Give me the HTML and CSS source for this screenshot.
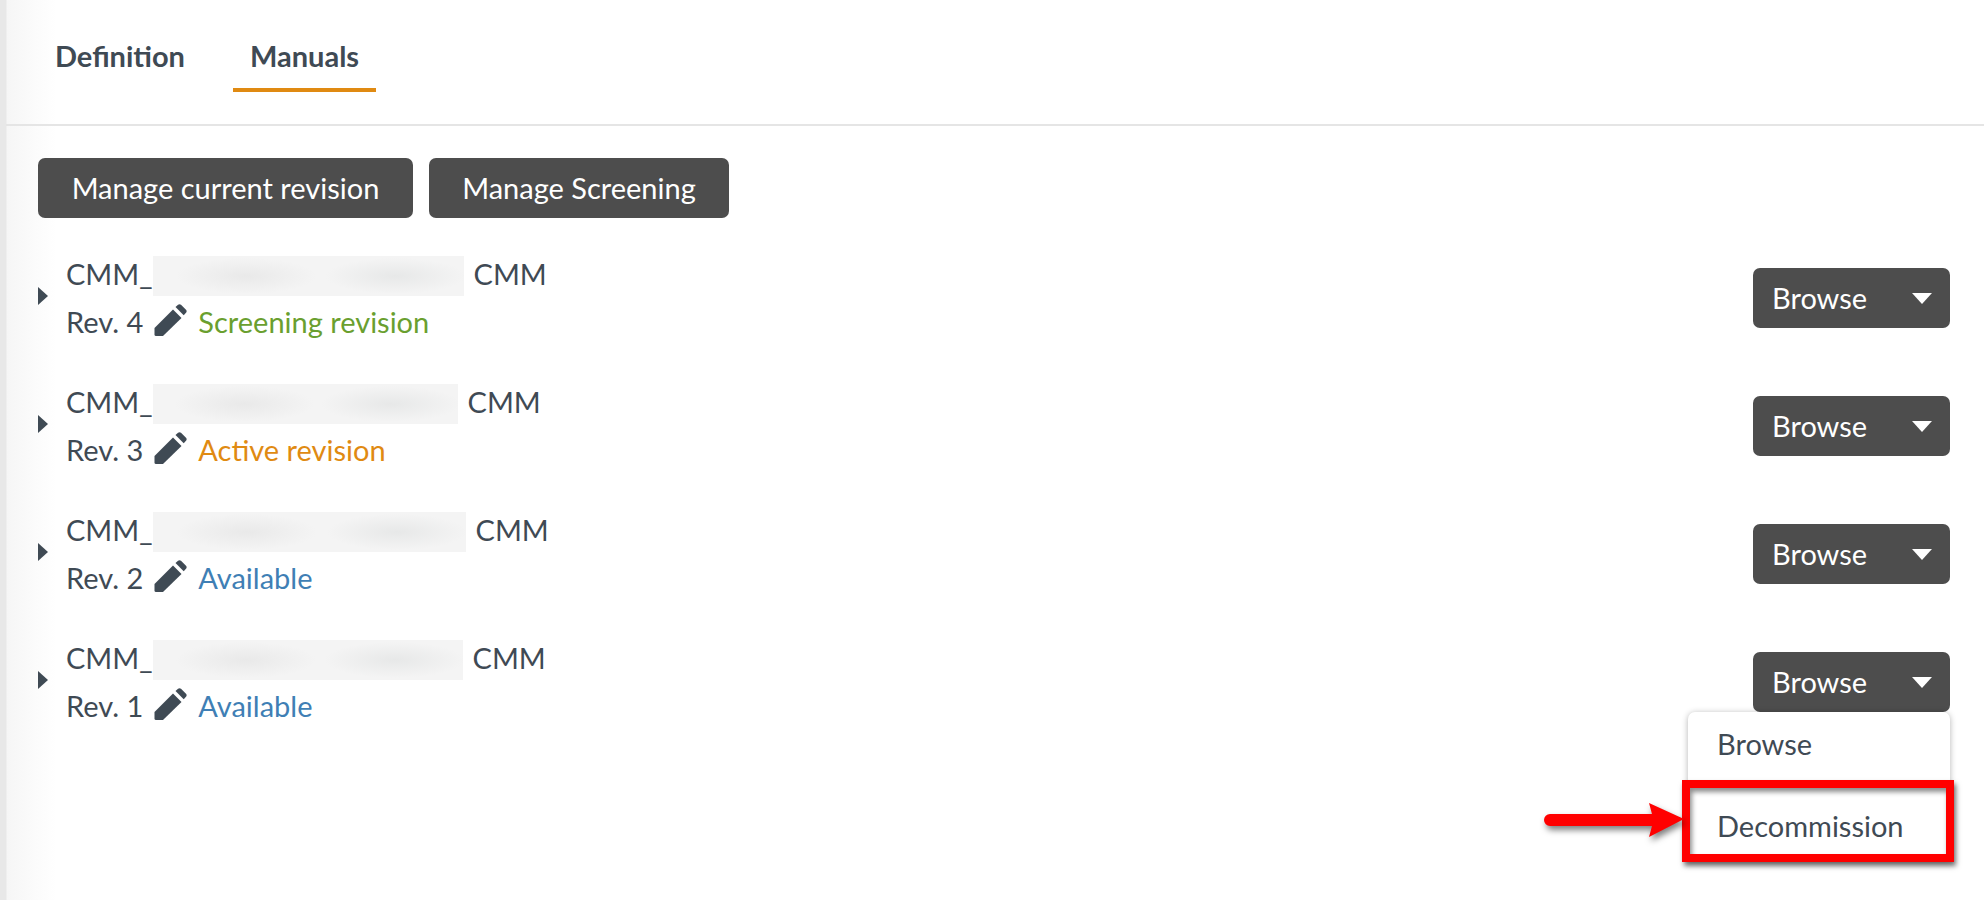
FILE: index.html
```html
<!DOCTYPE html>
<html lang="en">
<head>
    <meta charset="UTF-8">
    <meta name="viewport" content="width=device-width, initial-scale=1.0">
    <title>Manuals</title>
    <link rel="stylesheet" href="styles.css">
</head>
<body>
    <div class="tabs">
        <a href="#" class="tab">Definition</a>
        <a href="#" class="tab tab-active">Manuals</a>
    </div>

    <div class="content">
        <div class="actions">
            <button class="btn btn-current">Manage current revision</button>
            <button class="btn btn-screening">Manage Screening</button>
        </div>

        <div class="revision">
            <span class="expander"></span>
            <div class="revision-text">
                <div class="name-line">CMM_<span class="redact redact-1"></span><span class="suffix">CMM</span></div>
                <div class="rev-line">Rev. 4
                    <svg class="pencil" viewBox="0 0 33 32"><path d="M.5 24 19 5.5 27.5 14 9 32H2Q.5 32 .5 30.500Z"/><path d="M21.500 3 24 .8Q25.500-.3 27 .8L32 5.800Q33.300 7.300 32 8.800L29.700 11.200Z"/></svg>
                    <span class="status status-screening">Screening revision</span>
                </div>
            </div>
            <div class="browse"><button class="btn btn-browse">Browse<span class="caret"></span></button></div>
        </div>

        <div class="revision">
            <span class="expander"></span>
            <div class="revision-text">
                <div class="name-line">CMM_<span class="redact redact-2"></span><span class="suffix">CMM</span></div>
                <div class="rev-line">Rev. 3
                    <svg class="pencil" viewBox="0 0 33 32"><path d="M.5 24 19 5.5 27.5 14 9 32H2Q.5 32 .5 30.500Z"/><path d="M21.500 3 24 .8Q25.500-.3 27 .8L32 5.800Q33.300 7.300 32 8.800L29.700 11.200Z"/></svg>
                    <span class="status status-active">Active revision</span>
                </div>
            </div>
            <div class="browse"><button class="btn btn-browse">Browse<span class="caret"></span></button></div>
        </div>

        <div class="revision">
            <span class="expander"></span>
            <div class="revision-text">
                <div class="name-line">CMM_<span class="redact redact-3"></span><span class="suffix">CMM</span></div>
                <div class="rev-line">Rev. 2
                    <svg class="pencil" viewBox="0 0 33 32"><path d="M.5 24 19 5.5 27.5 14 9 32H2Q.5 32 .5 30.500Z"/><path d="M21.500 3 24 .8Q25.500-.3 27 .8L32 5.800Q33.300 7.300 32 8.800L29.700 11.200Z"/></svg>
                    <span class="status status-available">Available</span>
                </div>
            </div>
            <div class="browse"><button class="btn btn-browse">Browse<span class="caret"></span></button></div>
        </div>

        <div class="revision">
            <span class="expander"></span>
            <div class="revision-text">
                <div class="name-line">CMM_<span class="redact redact-4"></span><span class="suffix">CMM</span></div>
                <div class="rev-line">Rev. 1
                    <svg class="pencil" viewBox="0 0 33 32"><path d="M.5 24 19 5.5 27.5 14 9 32H2Q.5 32 .5 30.500Z"/><path d="M21.500 3 24 .8Q25.500-.3 27 .8L32 5.800Q33.300 7.300 32 8.800L29.700 11.200Z"/></svg>
                    <span class="status status-available">Available</span>
                </div>
            </div>
            <div class="browse">
                <button class="btn btn-browse">Browse<span class="caret"></span></button>
                <div class="menu">
                    <a href="#" class="menu-item">Browse</a>
                    <a href="#" class="menu-item">Decommission</a>
                </div>
            </div>
        </div>
    </div>

    <div class="callout-box"></div>
    <svg class="callout-arrow" viewBox="0 0 150 44"><path d="M6 12H108L105 1 140 17 105 35 108 24H6A6 6 0 0 1 6 12Z"/></svg>
</body>
</html>
```

FILE: styles.css
```css
html, body { height: 100%; }
body { font-family: Lato, "Open Sans", sans-serif; font-size: 29px; line-height: 48px; color: #3f4a54; margin: 0; padding: 0 0 0 6px; overflow: hidden; position: relative; background: linear-gradient(to right, #e8e8e8 0, #e8e8e8 6px, #f6f6f6 7px, #ffffff 56px); }

.tabs { display: flex; gap: 31px; height: 124px; padding-left: 32px; border-bottom: 2px solid #e5e5e5; }
.tab { height: 92px; box-sizing: border-box; padding: 32px 17px 0; line-height: 48px; color: #3f4a54; font-weight: 700; text-decoration: none; }
.tab-active { border-bottom: 4px solid #e08a12; }

.content { padding: 32px 34px 0 32px; }
.actions { display: flex; gap: 16px; margin-bottom: 16px; }
.btn { height: 60px; background-color: #4d4d4d; color: white; border: none; border-radius: 7px; font: inherit; line-height: 48px; padding: 0 18px; cursor: pointer; }
.btn-current { width: 375px; }
.btn-screening { width: 300px; }

.revision { display: flex; align-items: center; height: 128px; }
.expander { width: 0; height: 0; border-left: 10px solid #3f4a54; border-top: 9px solid transparent; border-bottom: 9px solid transparent; margin: -4px 18px 0 0; }
.revision-text { flex: 1; }
.name-line { display: flex; align-items: center; height: 48px; }
.rev-line { display: flex; align-items: center; gap: 11px; height: 48px; }
.suffix { margin-left: 10px; }
.pencil { width: 33px; height: 32px; fill: #3f4a54; margin-top: -4px; }
.status-screening { color: #6a9f2f; }
.status-active { color: #e08a12; }
.status-available { color: #3f7fb5; }

.redact { display: block; height: 40px; margin-top: 4px; background: radial-gradient(ellipse 70px 18px at 30% 50%, #e9e9e9, transparent), radial-gradient(ellipse 70px 18px at 78% 50%, #e7e8e8, transparent), #f4f4f4; }
.redact-1 { width: 311px; }
.redact-2 { width: 305px; }
.redact-3 { width: 313px; }
.redact-4 { width: 310px; }

.browse { position: relative; }
.btn-browse { display: flex; align-items: center; justify-content: space-between; width: 197px; padding: 0 18px 0 19px; }
.caret { width: 0; height: 0; border-top: 11px solid white; border-left: 10px solid transparent; border-right: 10px solid transparent; }

.menu { position: absolute; top: 100%; right: 0; width: 262px; height: 148px; display: flex; flex-direction: column; gap: 18px; background: white; border-radius: 7px 7px 0 0; box-shadow: 0 1px 6px rgba(0, 0, 0, 0.3); }
.menu-item { height: 64px; line-height: 64px; padding-left: 29px; color: #3f4a54; text-decoration: none; }

.callout-box { position: absolute; left: 1682px; top: 780px; width: 272px; height: 82px; box-sizing: border-box; border: 8px solid #ff0000; box-shadow: 2px 4px 5px rgba(0, 0, 0, 0.55), inset 2px 4px 5px rgba(0, 0, 0, 0.45); }
.callout-arrow { position: absolute; left: 1544px; top: 802px; width: 150px; height: 44px; fill: #ff0000; filter: drop-shadow(2px 4px 3px rgba(0, 0, 0, 0.5)); }
```
